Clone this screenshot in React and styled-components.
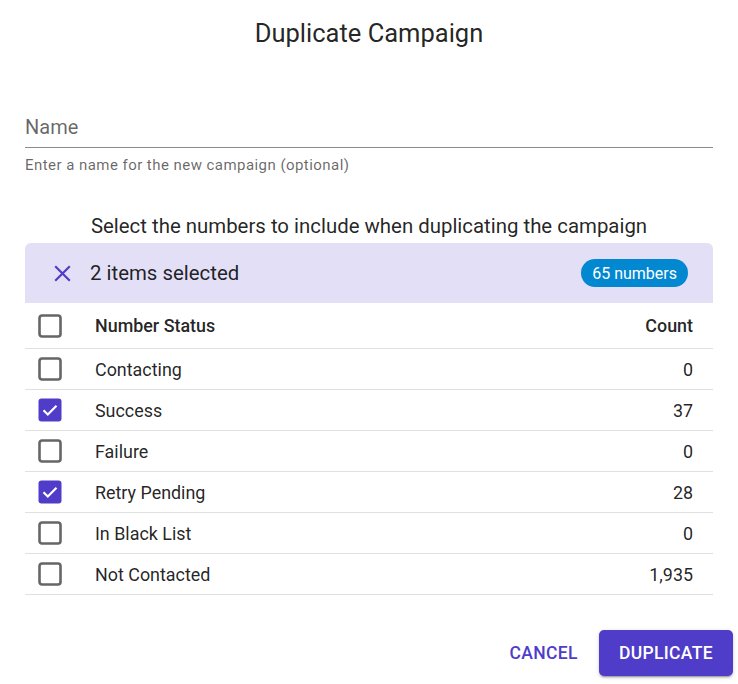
import React, { useState } from "react";
import styled, { createGlobalStyle } from "styled-components";

const Global = createGlobalStyle`
  html, body { margin: 0; padding: 0; background: #fff; }
  body { font-family: Roboto, "Noto Sans", "Liberation Sans", sans-serif; color: rgba(0,0,0,0.87); }
  * { box-sizing: border-box; }
`;

const PURPLE = "#4f3cc9";

const Dialog = styled.div`
  width: 738px;
  height: 684px;
  display: flex;
  flex-direction: column;
  background: #fff;
`;

const Title = styled.h2`
  margin: 0;
  padding-top: 17px;
  height: 66px;
  text-align: center;
  font-size: 25.5px;
  font-weight: 400;
  line-height: 32px;
  color: rgba(0, 0, 0, 0.87);
`;

const Content = styled.div`
  padding: 0 25px;
  display: flex;
  flex-direction: column;
`;

const Field = styled.div`
  margin-top: 39px;
  display: flex;
  flex-direction: column;
`;

const InputBox = styled.label`
  height: 43px;
  border-bottom: 1px solid #8a8a8a;
  display: flex;
  align-items: flex-end;
  padding-bottom: 8px;
  font-size: 20px;
  color: rgba(0, 0, 0, 0.6);
`;

const Helper = styled.div`
  margin-top: 8px;
  font-size: 15px;
  letter-spacing: 0.03em;
  line-height: 18px;
  color: rgba(0, 0, 0, 0.6);
`;

const Prompt = styled.div`
  margin-top: 40px;
  text-align: center;
  font-size: 20.4px;
  line-height: 24px;
  padding-bottom: 5px;
  color: rgba(0, 0, 0, 0.87);
`;

const Toolbar = styled.div`
  height: 60px;
  background: #e3dff6;
  border-radius: 6px 6px 0 0;
  display: flex;
  align-items: center;
  padding: 0 25px 0 29px;
  gap: 19px;
  font-size: 20.4px;
`;

const ClearIcon = styled.svg`
  width: 17px;
  height: 17px;
  flex: none;
`;

const Spacer = styled.div`
  flex: 1;
`;

const Chip = styled.span`
  height: 28px;
  padding: 0 11px;
  border-radius: 14px;
  background: #0288d1;
  color: #fff;
  font-size: 16px;
  display: inline-flex;
  align-items: center;
`;

const Table = styled.div`
  display: flex;
  flex-direction: column;
`;

const Row = styled.div`
  display: grid;
  grid-template-columns: 70px 1fr auto;
  align-items: center;
  height: ${(p) => (p.$head ? "46px" : "41px")};
  border-bottom: 1px solid #e0e0e0;
  padding-right: 20px;
  font-size: 17.9px;
  font-weight: ${(p) => (p.$head ? 500 : 400)};
  color: rgba(0, 0, 0, 0.87);
`;

const BoxCell = styled.div`
  display: flex;
  align-items: center;
  padding-left: 13px;
`;

const CheckSvg = styled.svg`
  width: 24px;
  height: 24px;
  display: block;
  cursor: pointer;
`;

const Count = styled.div`
  text-align: right;
`;

const Actions = styled.div`
  margin-top: auto;
  display: flex;
  justify-content: flex-end;
  align-items: center;
  gap: 21px;
  padding: 0 5px 8px 0;
`;

const Button = styled.button`
  font-family: inherit;
  font-size: 17.5px;
  font-weight: 500;
  letter-spacing: 0.02em;
  text-transform: uppercase;
  height: 46px;
  border-radius: 5px;
  border: none;
  cursor: pointer;
  padding: ${(p) => (p.$primary ? "0 20px" : "0 0")};
  background: ${(p) => (p.$primary ? PURPLE : "transparent")};
  color: ${(p) => (p.$primary ? "#fff" : PURPLE)};
  box-shadow: ${(p) =>
    p.$primary
      ? "0 3px 1px -2px rgba(0,0,0,0.2), 0 2px 2px 0 rgba(0,0,0,0.14), 0 1px 5px 0 rgba(0,0,0,0.12)"
      : "none"};
`;

function Checkbox({ checked, onClick }) {
  return (
    <CheckSvg viewBox="0 0 24 24" onClick={onClick}>
      {checked ? (
        <>
          <rect x="0.5" y="0.5" width="23" height="23" rx="3" fill={PURPLE} />
          <path d="M5.5 12.2l4.3 4.3 8.7-8.7" fill="none" stroke="#fff" strokeWidth="2.2" />
        </>
      ) : (
        <rect x="1.5" y="1.5" width="21" height="21" rx="2.5" fill="none" stroke="#666" strokeWidth="2.6" />
      )}
    </CheckSvg>
  );
}

const ROWS = [
  { name: "Contacting", count: 0 },
  { name: "Success", count: 37 },
  { name: "Failure", count: 0 },
  { name: "Retry Pending", count: 28 },
  { name: "In Black List", count: 0 },
  { name: "Not Contacted", count: 1935 },
];

export default function App() {
  const [sel, setSel] = useState({ Success: true, "Retry Pending": true });
  const chosen = ROWS.filter((r) => sel[r.name]);
  const total = chosen.reduce((s, r) => s + r.count, 0);
  const toggle = (n) => setSel((s) => ({ ...s, [n]: !s[n] }));

  return (
    <Dialog>
      <Global />
      <Title>Duplicate Campaign</Title>
      <Content>
        <Field>
          <InputBox>Name</InputBox>
          <Helper>Enter a name for the new campaign (optional)</Helper>
        </Field>
        <Prompt>Select the numbers to include when duplicating the campaign</Prompt>
        <Toolbar>
          <ClearIcon viewBox="0 0 14 14" onClick={() => setSel({})}>
            <path d="M1 1l12 12M13 1L1 13" stroke={PURPLE} strokeWidth="1.8" />
          </ClearIcon>
          <span>{chosen.length} items selected</span>
          <Spacer />
          <Chip>{total.toLocaleString("en-US")} numbers</Chip>
        </Toolbar>
        <Table>
          <Row $head>
            <BoxCell>
              <Checkbox checked={false} />
            </BoxCell>
            <div>Number Status</div>
            <Count>Count</Count>
          </Row>
          {ROWS.map((r) => (
            <Row key={r.name}>
              <BoxCell>
                <Checkbox checked={!!sel[r.name]} onClick={() => toggle(r.name)} />
              </BoxCell>
              <div>{r.name}</div>
              <Count>{r.count.toLocaleString("en-US")}</Count>
            </Row>
          ))}
        </Table>
      </Content>
      <Actions>
        <Button>Cancel</Button>
        <Button $primary>Duplicate</Button>
      </Actions>
    </Dialog>
  );
}
